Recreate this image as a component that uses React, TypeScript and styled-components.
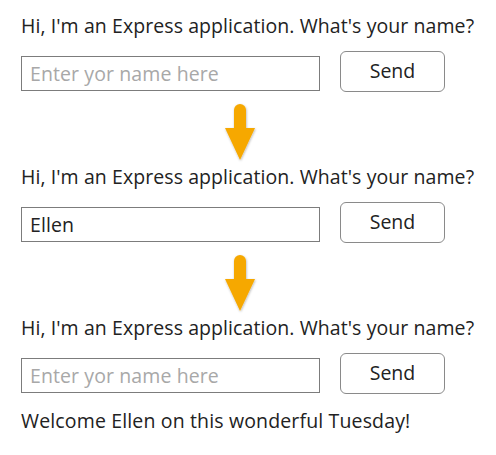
import React from "react";
import styled, { createGlobalStyle } from "styled-components";

const GlobalStyle = createGlobalStyle`
  html, body {
    margin: 0;
    padding: 0;
    background: #ffffff;
  }
  body {
    font-family: "Open Sans", "Noto Sans", sans-serif;
    color: #222222;
  }
`;

const Page = styled.div`
  display: flex;
  flex-direction: column;
  padding: 13px 0 0 21px;
  width: 496px;
  box-sizing: border-box;
`;

const Prompt = styled.div`
  font-size: 19.5px;
  line-height: 26px;
  letter-spacing: 0.08px;
  height: 26px;
  white-space: nowrap;
`;

const Row = styled.div`
  display: flex;
  align-items: flex-start;
  gap: 20px;
  margin-top: 17px;
`;

const NameInput = styled.div<{ $empty: boolean }>`
  width: 299px;
  height: 35px;
  box-sizing: border-box;
  border: 1.5px solid #7c7c7c;
  padding: 0 8px 1px;
  display: flex;
  align-items: center;
  font-size: 19.5px;
  letter-spacing: 0.1px;
  color: ${(p) => (p.$empty ? "#a8a8a8" : "#222222")};
`;

const SendButton = styled.button`
  width: 105px;
  height: 41px;
  margin-top: -5px;
  box-sizing: border-box;
  border: 1px solid #8a8a8a;
  border-radius: 6px;
  background: #ffffff;
  font-family: inherit;
  font-size: 19.5px;
  color: #222222;
  padding: 0 0 2px;
`;

const ArrowWrap = styled.div`
  height: 72px;
  margin-left: 199px;
  svg {
    display: block;
    margin-top: 10px;
  }
`;

const Welcome = styled.div`
  font-size: 19.5px;
  line-height: 26px;
  letter-spacing: 0.15px;
  margin-top: 14px;
  white-space: nowrap;
`;

const DownArrow = () => (
  <ArrowWrap>
    <svg width="40" height="62" viewBox="0 0 40 62">
      <defs>
        <filter id="sh" x="-30%" y="-30%" width="160%" height="160%">
          <feDropShadow dx="0.5" dy="1" stdDeviation="1" floodColor="#000" floodOpacity="0.3" />
        </filter>
      </defs>
      <g filter="url(#sh)" fill="#f6a800">
        <path d="M14 27 V8 a6 6 0 0 1 12 0 V27 Z" />
        <path d="M5 26 H35 L20 58 Z" />
      </g>
    </svg>
  </ArrowWrap>
);

const Step = ({ value }: { value?: string }) => (
  <div>
    <Prompt>Hi, I'm an Express application. What's your name?</Prompt>
    <Row>
      <NameInput $empty={!value}>{value || "Enter yor name here"}</NameInput>
      <SendButton>Send</SendButton>
    </Row>
  </div>
);

export default function App() {
  return (
    <>
      <GlobalStyle />
      <Page>
        <Step />
        <DownArrow />
        <Step value="Ellen" />
        <DownArrow />
        <Step />
        <Welcome>Welcome Ellen on this wonderful Tuesday!</Welcome>
      </Page>
    </>
  );
}
